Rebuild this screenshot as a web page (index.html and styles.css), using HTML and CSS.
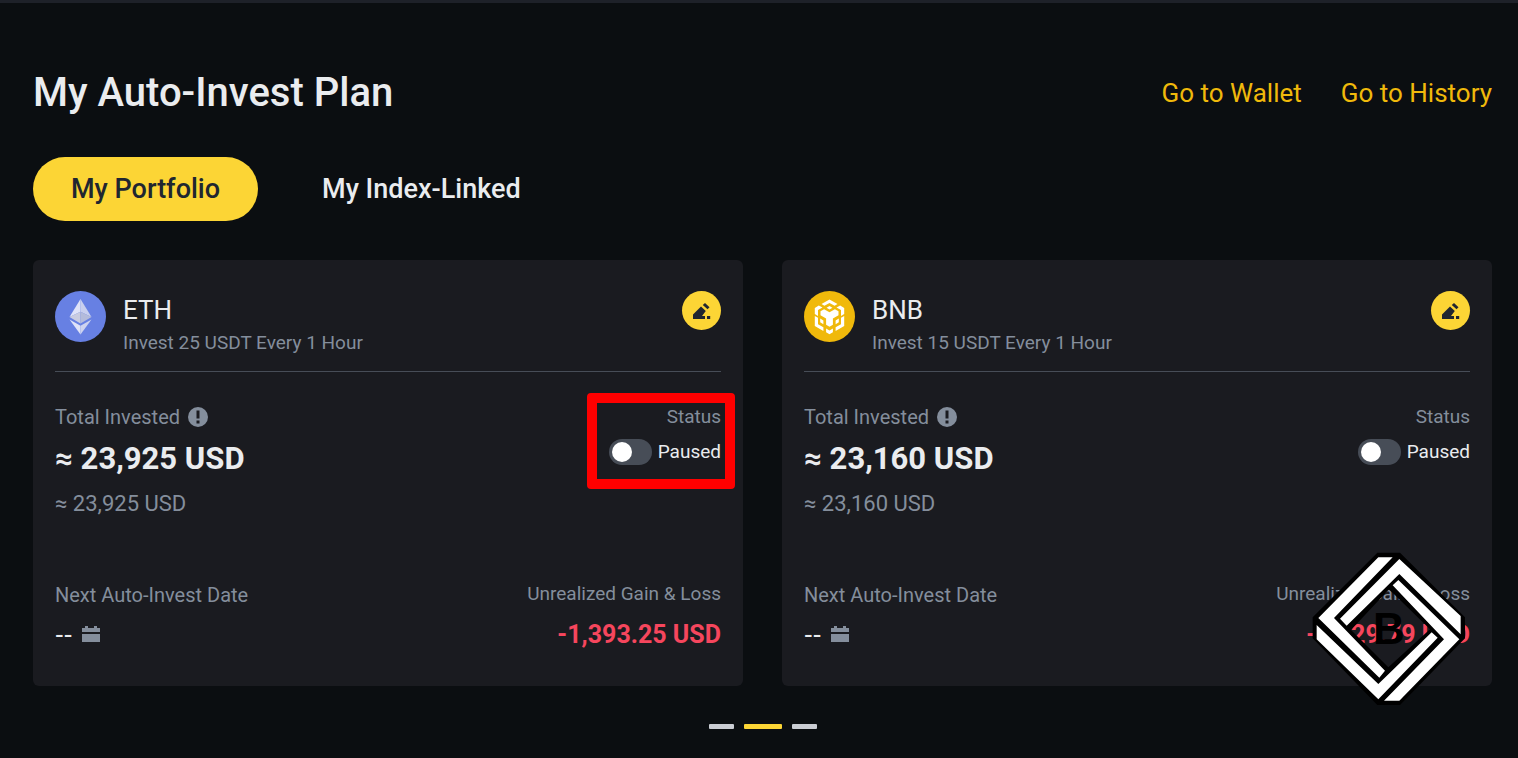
FILE: index.html
```html
<!DOCTYPE html>
<html lang="en">
<head>
    <meta charset="UTF-8">
    <meta name="viewport" content="width=device-width, initial-scale=1.0">
    <title>My Auto-Invest Plan</title>
    <link rel="stylesheet" href="styles.css">
</head>
<body>
    <!-- shared icons -->
    <svg class="icon-defs" width="0" height="0" aria-hidden="true">
        <symbol id="icon-edit" viewBox="0 0 18 18">
            <path d="M0 17v-4.500L8 4.500l4.800 4.500-3.800 5h3v3zM9.800 3 12 1l4.500 4.300-2 2zM14 14h3.200v3H14z" fill="currentColor"/>
        </symbol>
        <symbol id="icon-info" viewBox="0 0 20 20">
            <circle cx="10" cy="10" r="10" fill="currentColor"/>
            <path d="M8.500 3.500h3v8h-3zM8.500 13.500h3v3h-3z" fill="#1a1b20"/>
        </symbol>
        <symbol id="icon-calendar" viewBox="0 0 18 16">
            <path d="M0 2h3V0h3v2h6V0h3v2h3v4H0zM0 8h18v8H0z" fill="currentColor"/>
        </symbol>
    </svg>

    <div class="page">
        <header class="header">
            <h1>My Auto-Invest Plan</h1>
            <nav class="links">
                <a href="#">Go to Wallet</a>
                <a href="#">Go to History</a>
            </nav>
        </header>

        <div class="tabs">
            <button type="button" class="tab active">My Portfolio</button>
            <button type="button" class="tab">My Index-Linked</button>
        </div>

        <div class="cards">
            <section class="card">
                <div class="card-header">
                    <svg class="coin" viewBox="0 0 51 51">
                        <circle cx="25.500" cy="25.500" r="25.500" fill="#6780e3"/>
                        <path d="M25.500 8v12.800L14.500 26z" fill="#dfe3f8"/>
                        <path d="M25.500 8v12.800l11 5.200z" fill="#c9cfee"/>
                        <path d="M25.500 20.800v11.700L14.500 26z" fill="#c9cce0"/>
                        <path d="M25.500 20.800v11.700l11-6.500z" fill="#b4bbdb"/>
                        <path d="M14.500 28.500l11 6.200V43.500z" fill="#dfe3f8"/>
                        <path d="M36.500 28.500l-11 6.200V43.500z" fill="#ced3ef"/>
                    </svg>
                    <div class="coin-info">
                        <h2>ETH</h2>
                        <p>Invest 25 USDT Every 1 Hour</p>
                    </div>
                    <button type="button" class="edit-btn" aria-label="Edit"><svg><use href="#icon-edit"/></svg></button>
                </div>
                <div class="card-row">
                    <div class="invested">
                        <p class="label">Total Invested <svg class="info"><use href="#icon-info"/></svg></p>
                        <p class="total">≈ 23,925 USD</p>
                        <p class="total-sub">≈ 23,925 USD</p>
                    </div>
                    <div class="status highlight">
                        <p class="label">Status</p>
                        <label class="switch"><input type="checkbox">Paused</label>
                    </div>
                </div>
                <div class="card-row">
                    <div>
                        <p class="label">Next Auto-Invest Date</p>
                        <p class="date">-- <svg class="calendar"><use href="#icon-calendar"/></svg></p>
                    </div>
                    <div class="gain">
                        <p class="label">Unrealized Gain &amp; Loss</p>
                        <p class="loss">-1,393.25 USD</p>
                    </div>
                </div>
            </section>

            <section class="card">
                <div class="card-header">
                    <svg class="coin" viewBox="0 0 51 51">
                        <circle cx="25.500" cy="25.500" r="25.500" fill="#f0b90b"/>
                        <g fill="#fff">
                            <path d="M25.500 8.500l8 4.600-2.900 1.700-5.100-2.900-5.100 2.900-2.900-1.700z"/>
                            <path d="M25.500 15l2.900 1.700-2.900 1.700-2.900-1.700z"/>
                            <path d="M10.800 23v-6l4-2.500 3.700 2-4.500 2.600V25z"/>
                            <path d="M40.200 23v-6l-4-2.500-3.700 2 4.500 2.600V25z"/>
                            <path d="M16.500 20.300l3.600-2.100 5.400 3.100 5.400-3.100 3.600 2.100v3.900l-5.600 3.300v6.200l-3.400 2-3.400-2v-6.200l-5.600-3.300z"/>
                            <path d="M10.800 25l3.200 1.800v6.400l5.400 3.100V40l-8.600-5z"/>
                            <path d="M40.200 25L37 26.800v6.400l-5.400 3.100V40l8.600-5z"/>
                            <path d="M16.200 27.600l3.200 1.900v3.700l-3.200-1.900z"/>
                            <path d="M34.800 27.600l-3.200 1.900v3.700l3.200-1.900z"/>
                            <path d="M22.100 37.600l3.400 2 3.400-2v3.600l-3.400 2-3.400-2z"/>
                        </g>
                    </svg>
                    <div class="coin-info">
                        <h2>BNB</h2>
                        <p>Invest 15 USDT Every 1 Hour</p>
                    </div>
                    <button type="button" class="edit-btn" aria-label="Edit"><svg><use href="#icon-edit"/></svg></button>
                </div>
                <div class="card-row">
                    <div class="invested">
                        <p class="label">Total Invested <svg class="info"><use href="#icon-info"/></svg></p>
                        <p class="total">≈ 23,160 USD</p>
                        <p class="total-sub">≈ 23,160 USD</p>
                    </div>
                    <div class="status">
                        <p class="label">Status</p>
                        <label class="switch"><input type="checkbox">Paused</label>
                    </div>
                </div>
                <div class="card-row">
                    <div>
                        <p class="label">Next Auto-Invest Date</p>
                        <p class="date">-- <svg class="calendar"><use href="#icon-calendar"/></svg></p>
                    </div>
                    <div class="gain">
                        <p class="label">Unrealized Gain &amp; Loss</p>
                        <p class="loss">-1,329.79 USD</p>
                    </div>
                </div>

                <div class="watermark">
                    <svg viewBox="66 36 462 462">
                        <path fill="#000" fill-rule="evenodd" d="M262 38h68l195 194v63L330 495h-68L68 295v-63zM297 148L183 270l112 112 125-114z"/>
                        <g fill="#fff">
                            <path d="M265 52h43L132 234l153 158-17 21L85 234z"/>
                            <path d="M328 57l184 171v55L328 102 170 257l-20-21z"/>
                            <path d="M325 120l183 178-180 184h-46l180-184-154-162z"/>
                            <path d="M80 255l185 177 160-155 18 16-178 185L80 298z"/>
                        </g>
                    </svg>
                    <span>B</span>
                </div>
            </section>
        </div>

        <div class="dots">
            <span></span>
            <span class="active"></span>
            <span></span>
        </div>
    </div>
</body>
</html>
```
FILE: styles.css
```css
* { box-sizing: border-box; }
body { margin: 0; background: #0b0e11; color: #eaecef; font-family: Roboto, "Liberation Sans", sans-serif; }
h1, h2, p { margin: 0; }
button { border: 0; padding: 0; font-family: inherit; cursor: pointer; }
.icon-defs { position: absolute; }
.page { min-height: 100vh; border-top: 3px solid #1e2129; padding: 66px 26px 28px 33px; }

.header { display: flex; justify-content: space-between; align-items: center; }
.header h1 { font-size: 40px; line-height: 48px; font-weight: 500; }
.links { display: flex; gap: 39px; }
.links a { color: #f0b90b; font-size: 26px; line-height: 32px; text-decoration: none; }

.tabs { display: flex; margin-top: 40px; gap: 26px; }
.tab { height: 64px; padding: 0 38px; border-radius: 32px; background: none; color: #eaecef; font-size: 27px; font-weight: 500; }
.tab.active { background: #fcd535; color: #202630; }

.cards { display: grid; grid-template-columns: 1fr 1fr; gap: 39px; margin-top: 39px; }
.card { position: relative; padding: 31px 22px 35px; border-radius: 6px; background: #1a1b20; }
.card-header { display: flex; align-items: flex-start; padding-bottom: 14px; border-bottom: 1px solid #474d57; }
.coin { width: 51px; height: 51px; margin-right: 17px; }
.coin-info { flex: 1; }
.coin-info h2 { font-size: 26px; line-height: 38px; font-weight: 400; }
.coin-info p { font-size: 19px; line-height: 28px; color: #848e9c; }
.edit-btn { display: flex; align-items: center; justify-content: center; width: 39px; height: 39px; border-radius: 50%; background: #fcd535; color: #202630; }
.edit-btn svg { width: 18px; height: 18px; }

.card-row { display: flex; justify-content: space-between; margin-top: 32px; }
.label { display: flex; align-items: center; gap: 8px; font-size: 20px; line-height: 26px; color: #848e9c; }
.info { width: 20px; height: 20px; }
.total { margin-top: 8px; font-size: 31px; line-height: 42px; font-weight: 700; }
.total-sub { margin-top: 8px; font-size: 22px; line-height: 32px; color: #848e9c; }
.invested { margin-bottom: 30px; }

.status { position: relative; align-self: flex-start; text-align: right; }
.status .label, .gain .label { justify-content: flex-end; font-size: 19px; }
.switch { display: flex; align-items: center; gap: 6px; margin-top: 9px; font-size: 19px; line-height: 26px; }
.switch input { appearance: none; width: 43px; height: 26px; margin: 0; padding: 3px; border-radius: 13px; background: #474d57; }
.switch input::before { content: ""; display: block; width: 20px; height: 20px; border-radius: 50%; background: #fff; }
.switch input:checked { background: #fcd535; }
.switch input:checked::before { margin-left: auto; }
.highlight::after { content: ""; position: absolute; inset: -11px -14px -24px -22px; border: 10px solid #f00; border-radius: 4px; pointer-events: none; }

.date { display: flex; align-items: center; gap: 10px; margin-top: 10px; font-family: "Liberation Sans", sans-serif; font-size: 26px; line-height: 32px; }
.calendar { width: 18px; height: 16px; color: #848e9c; }
.gain { text-align: right; }
.gain .label { line-height: 24px; }
.loss { margin-top: 13px; font-size: 25px; line-height: 32px; font-weight: 700; color: #f6465d; }

.watermark { position: absolute; right: 26px; bottom: -20px; display: flex; align-items: center; justify-content: center; width: 154px; height: 154px; }
.watermark svg { position: absolute; width: 100%; height: 100%; }
.watermark span { position: relative; color: #000; font: bold 44px/50px "Liberation Sans", sans-serif; }

.dots { display: flex; justify-content: center; gap: 10px; margin-top: 38px; }
.dots span { width: 25px; height: 5px; border-radius: 1px; background: #cacdd3; }
.dots .active { width: 38px; background: #fcd535; }
```
